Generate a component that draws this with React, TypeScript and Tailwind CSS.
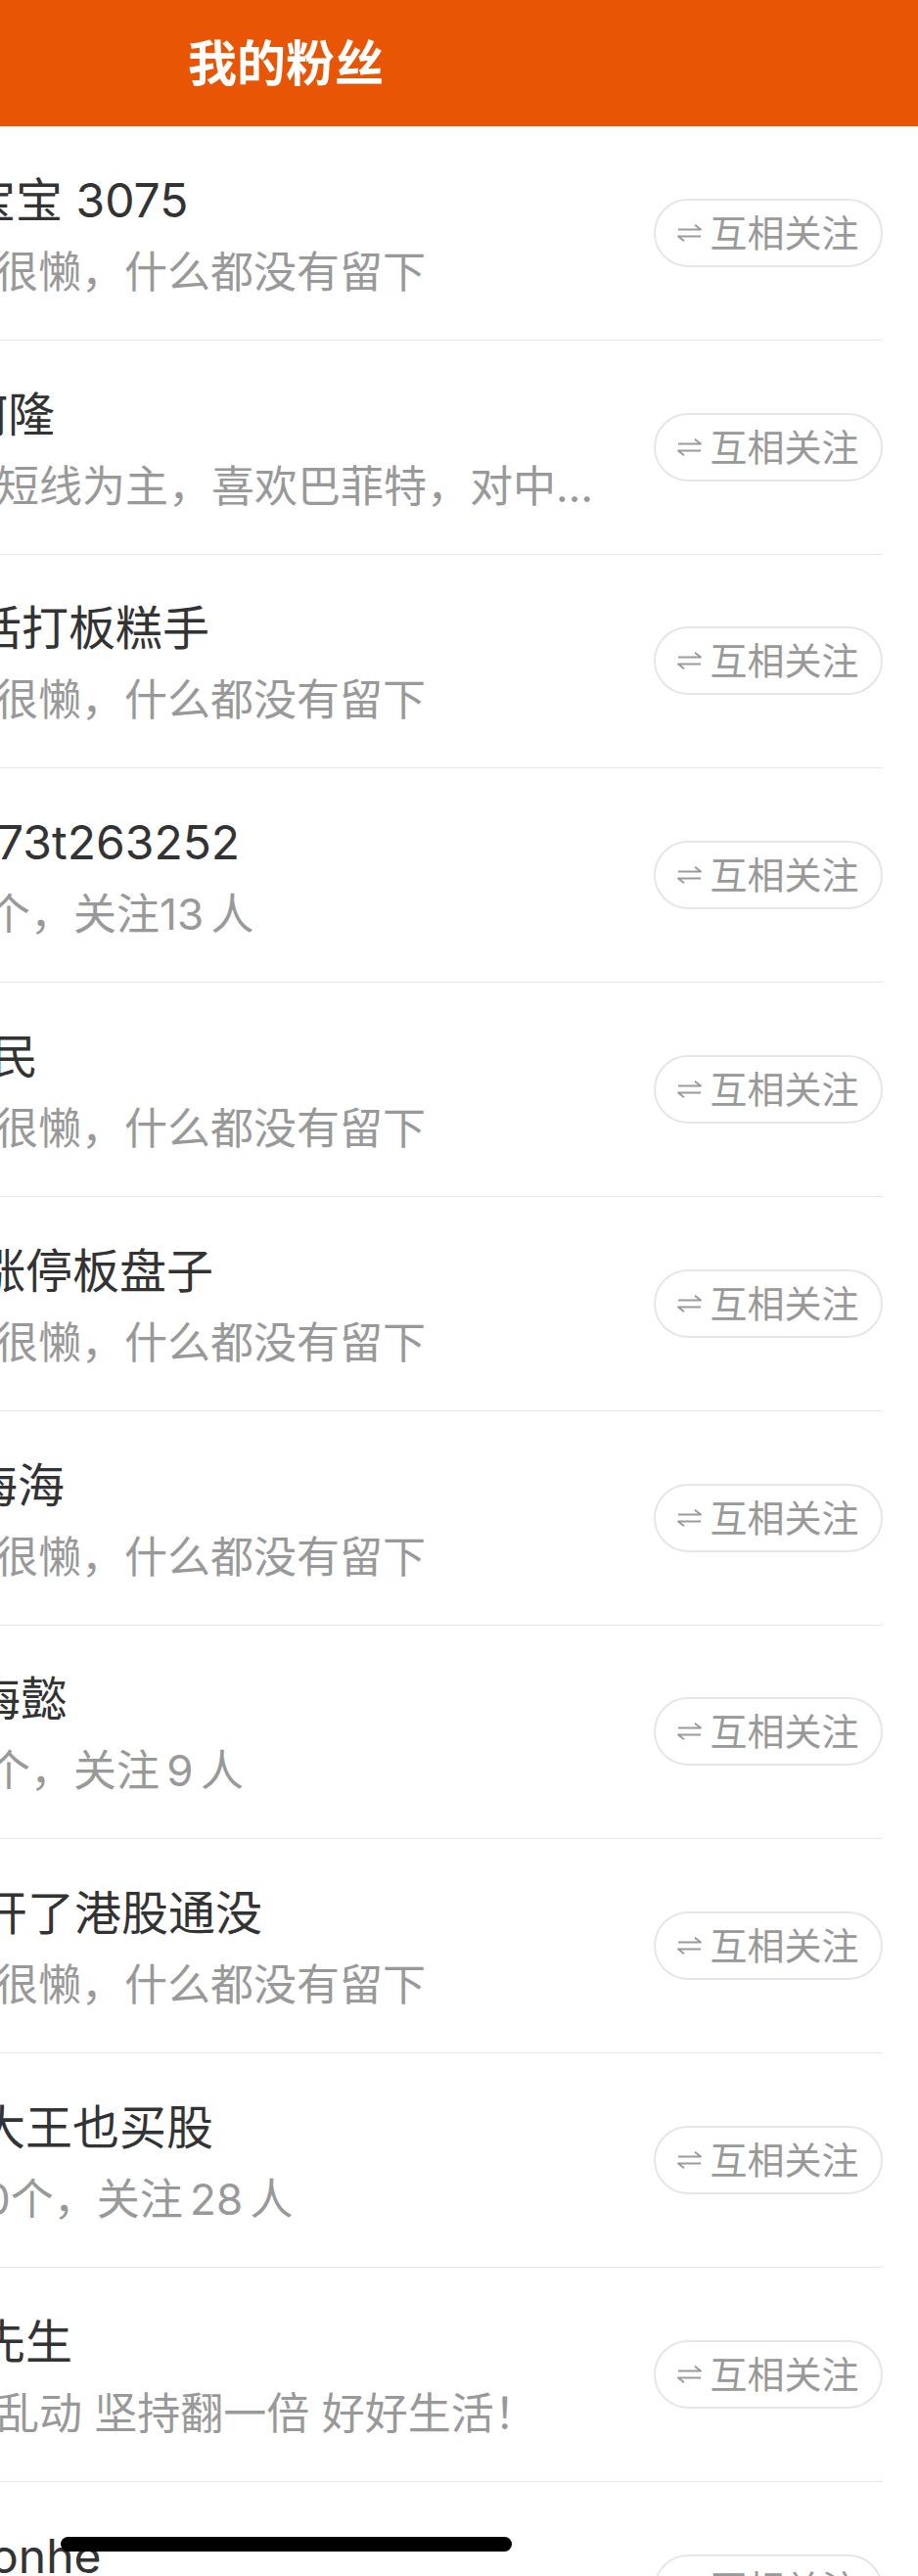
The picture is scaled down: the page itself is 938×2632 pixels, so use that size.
import React from "react";

type Fan = {
  name: string;
  nameShift: string;
  bio: string;
  bioShift: string;
};

const fans: Fan[] = [
  { name: "宝宝 3075", nameShift: "-ml-[32px]", bio: "很懒，什么都没有留下", bioShift: "-ml-[5px]" },
  { name: "何隆", nameShift: "-ml-[40px]", bio: "短线为主，喜欢巴菲特，对中长线价值投资也有研究", bioShift: "-ml-[4px]" },
  { name: "话打板糕手", nameShift: "-ml-[26px]", bio: "很懒，什么都没有留下", bioShift: "-ml-[5px]" },
  { name: "73t263252", nameShift: "-ml-[3px]", bio: "个，关注13\u2006人", bioShift: "-ml-[13px]" },
  { name: "民", nameShift: "-ml-[9px]", bio: "很懒，什么都没有留下", bioShift: "-ml-[5px]" },
  { name: "涨停板盘子", nameShift: "-ml-[22px]", bio: "很懒，什么都没有留下", bioShift: "-ml-[5px]" },
  { name: "海海", nameShift: "-ml-[30px]", bio: "很懒，什么都没有留下", bioShift: "-ml-[5px]" },
  { name: "梅懿", nameShift: "-ml-[27px]", bio: "个，关注\u20069\u2006人", bioShift: "-ml-[13px]" },
  { name: "开了港股通没", nameShift: "-ml-[20px]", bio: "很懒，什么都没有留下", bioShift: "-ml-[5px]" },
  { name: "大王也买股", nameShift: "-ml-[22px]", bio: "0个，关注\u200628\u2006人", bioShift: "-ml-[17px]" },
  { name: "先生", nameShift: "-ml-[22px]", bio: "乱动 坚持翻一倍 好好生活！", bioShift: "-ml-[4px]" },
  { name: "onhe", nameShift: "-ml-[10px]", bio: "很懒，什么都没有留下", bioShift: "-ml-[5px]" },
];

function MutualIcon() {
  return (
    <svg width="25" height="18" viewBox="0 0 25 18" fill="none" className="mr-[8px] shrink-0">
      <path d="M1 5.5H24L18 0.8" stroke="#9b9b9b" strokeWidth="2" strokeLinejoin="round" />
      <path d="M24 12.5H1L7 17.2" stroke="#9b9b9b" strokeWidth="2" strokeLinejoin="round" />
    </svg>
  );
}

function FanRow({ fan }: { fan: Fan }) {
  return (
    <div className="flex items-center w-[902px] h-[218.8px] shrink-0 border-b border-[#e6e6e6]">
      {/* text column, left part of the list is scrolled off screen */}
      <div className="flex-1 min-w-0 overflow-hidden pt-[5px] mr-[30px]">
        <p className={`${fan.nameShift} text-[48px] leading-[48px] text-[#333333] whitespace-nowrap`}>
          {fan.name}
        </p>
        <p className={`${fan.bioShift} mt-[27px] text-[44px] leading-[44px] text-[#999999] truncate`}>
          {fan.bio}
        </p>
      </div>
      <button className="flex items-center justify-center w-[234px] h-[70px] shrink-0 rounded-full border-2 border-[#e6e6e6] bg-white">
        <MutualIcon />
        <span className="text-[38px] leading-[38px] text-[#999999]">互相关注</span>
      </button>
    </div>
  );
}

export default function App() {
  return (
    <div className="relative w-[938px] h-[2632px] overflow-hidden bg-white font-[Inter,'Noto_Sans_CJK_SC',sans-serif]">
      <header className="h-[129px] bg-[#e85504] flex">
        <div className="w-[584px] flex items-center justify-center">
          <h1 className="text-[50px] leading-[50px] font-semibold text-white">我的粉丝</h1>
        </div>
      </header>

      <div className="flex flex-col">
        {fans.map((fan, i) => (
          <FanRow key={i} fan={fan} />
        ))}
      </div>

      {/* home indicator */}
      <div className="absolute left-[62px] top-[2592px] w-[461px] h-[15px] rounded-full bg-black" />
    </div>
  );
}
